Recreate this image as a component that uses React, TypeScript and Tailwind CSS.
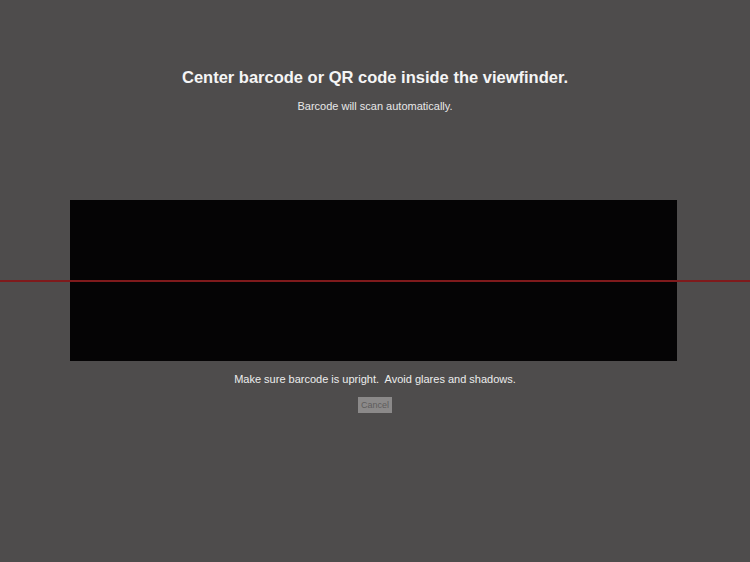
export default function App() {
  return (
    <div
      className="relative w-[750px] h-[562px] overflow-hidden bg-[#4e4c4c] flex flex-col items-center text-white"
      style={{ fontFamily: '"Liberation Sans", Arial, sans-serif' }}
    >
      <h1 className="mt-[66px] text-[16.5px] leading-[22px] font-bold text-[#f5f5f5]">
        Center barcode or QR code inside the viewfinder.
      </h1>
      <p className="mt-[11px] text-[11px] leading-[14px] text-[#e8e8e8]">Barcode will scan automatically.</p>

      <div className="mt-[87px] w-[607px] h-[161px] ml-[-3px] bg-[#050405]" />

      <p className="mt-[11px] text-[11px] leading-[14px] text-[#ececec] whitespace-pre">
        Make sure barcode is upright.  Avoid glares and shadows.
      </p>

      <button className="mt-[11px] w-[34px] h-[16px] bg-[#8b8989] text-[#5e5c5c] text-[9px] leading-[16px] text-center">
        Cancel
      </button>

      {/* scan line across the viewfinder */}
      <div className="absolute left-0 right-0 top-[280px] h-[2px] bg-[#7f1a1c]" />
    </div>
  );
}
